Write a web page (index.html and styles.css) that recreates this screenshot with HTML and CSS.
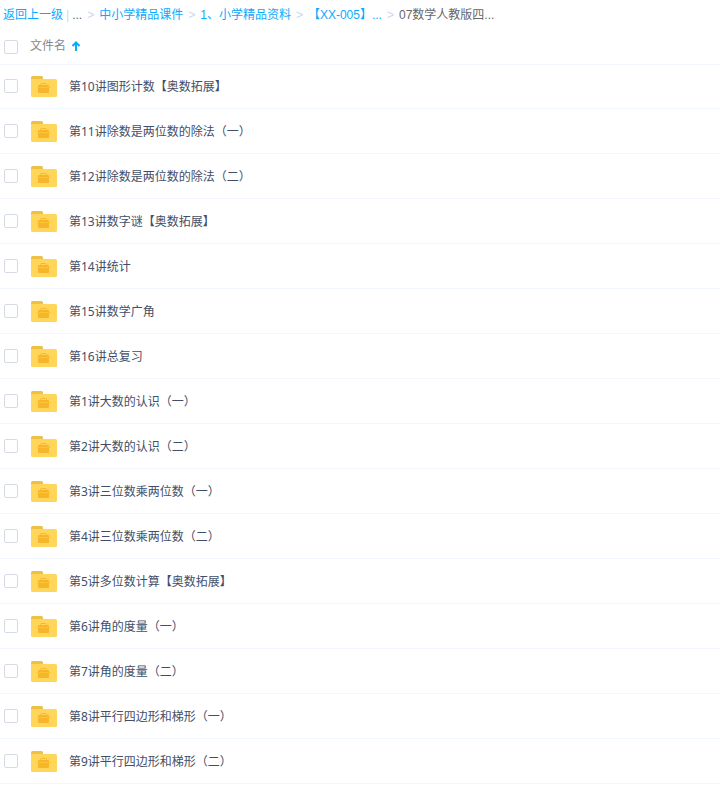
FILE: index.html
```
<!DOCTYPE html>
<html lang="zh-CN">
<head>
<meta charset="utf-8">
<title>07数学人教版四年级</title>
<link rel="stylesheet" href="styles.css">
</head>
<body>
<svg class="sprite" aria-hidden="true">
  <symbol id="folder" viewBox="0 0 26 21">
    <path fill="#eec047" d="M0 6V1.5Q0 0 1.5 0H10.500Q12 0 12 1.500V6Z"/>
    <path fill="#ffd55a" d="M0 3H24.500Q26 3 26 4.500V19.500Q26 21 24.500 21H1.500Q0 21 0 19.500Z"/>
    <path fill="none" stroke="#f7b731" d="M9.500 9V8.500Q9.500 7.500 10.500 7.500H14.500Q15.500 7.500 15.500 8.500V9"/>
    <path fill="#f7b52c" d="M8 9H17Q18 9 18 10V11H7V10Q7 9 8 9ZM7 12H18V16Q18 17 17 17H8Q7 17 7 16Z"/>
    <path fill="#fdc62f" d="M6 11H20V12H6Z"/>
  </symbol>
</svg>
<nav class="crumbs" aria-label="路径">
  <span class="back"><a href="#">返回上一级</a><span class="bar">|</span><span>...</span></span>
  <span class="sep">&gt;</span><a href="#">中小学精品课件</a>
  <span class="sep">&gt;</span><a href="#">1、小学精品资料</a>
  <span class="sep">&gt;</span><a href="#">【XX-005】...</a>
  <span class="sep">&gt;</span><span>07数学人教版四...</span>
</nav>
<table class="files">
  <thead>
    <tr>
      <th class="pick"><input type="checkbox" aria-label="全选"></th>
      <th class="title" colspan="2"><button class="sort" type="button">文件名<svg width="8" height="10" viewBox="0 0 8 10" aria-hidden="true"><path d="M4 10V2M0.500 5L4 1.500L7.500 5" fill="none" stroke="#09aaff" stroke-width="2"/></svg></button></th>
    </tr>
  </thead>
  <tbody>
    <tr><td class="pick"><input type="checkbox" id="f1"></td><td class="icon"><svg class="folder"><use href="#folder"/></svg></td><td><label for="f1">第10讲图形计数【奥数拓展】</label></td></tr>
    <tr><td class="pick"><input type="checkbox" id="f2"></td><td class="icon"><svg class="folder"><use href="#folder"/></svg></td><td><label for="f2">第11讲除数是两位数的除法（一）</label></td></tr>
    <tr><td class="pick"><input type="checkbox" id="f3"></td><td class="icon"><svg class="folder"><use href="#folder"/></svg></td><td><label for="f3">第12讲除数是两位数的除法（二）</label></td></tr>
    <tr><td class="pick"><input type="checkbox" id="f4"></td><td class="icon"><svg class="folder"><use href="#folder"/></svg></td><td><label for="f4">第13讲数字谜【奥数拓展】</label></td></tr>
    <tr><td class="pick"><input type="checkbox" id="f5"></td><td class="icon"><svg class="folder"><use href="#folder"/></svg></td><td><label for="f5">第14讲统计</label></td></tr>
    <tr><td class="pick"><input type="checkbox" id="f6"></td><td class="icon"><svg class="folder"><use href="#folder"/></svg></td><td><label for="f6">第15讲数学广角</label></td></tr>
    <tr><td class="pick"><input type="checkbox" id="f7"></td><td class="icon"><svg class="folder"><use href="#folder"/></svg></td><td><label for="f7">第16讲总复习</label></td></tr>
    <tr><td class="pick"><input type="checkbox" id="f8"></td><td class="icon"><svg class="folder"><use href="#folder"/></svg></td><td><label for="f8">第1讲大数的认识（一）</label></td></tr>
    <tr><td class="pick"><input type="checkbox" id="f9"></td><td class="icon"><svg class="folder"><use href="#folder"/></svg></td><td><label for="f9">第2讲大数的认识（二）</label></td></tr>
    <tr><td class="pick"><input type="checkbox" id="f10"></td><td class="icon"><svg class="folder"><use href="#folder"/></svg></td><td><label for="f10">第3讲三位数乘两位数（一）</label></td></tr>
    <tr><td class="pick"><input type="checkbox" id="f11"></td><td class="icon"><svg class="folder"><use href="#folder"/></svg></td><td><label for="f11">第4讲三位数乘两位数（二）</label></td></tr>
    <tr><td class="pick"><input type="checkbox" id="f12"></td><td class="icon"><svg class="folder"><use href="#folder"/></svg></td><td><label for="f12">第5讲多位数计算【奥数拓展】</label></td></tr>
    <tr><td class="pick"><input type="checkbox" id="f13"></td><td class="icon"><svg class="folder"><use href="#folder"/></svg></td><td><label for="f13">第6讲角的度量（一）</label></td></tr>
    <tr><td class="pick"><input type="checkbox" id="f14"></td><td class="icon"><svg class="folder"><use href="#folder"/></svg></td><td><label for="f14">第7讲角的度量（二）</label></td></tr>
    <tr><td class="pick"><input type="checkbox" id="f15"></td><td class="icon"><svg class="folder"><use href="#folder"/></svg></td><td><label for="f15">第8讲平行四边形和梯形（一）</label></td></tr>
    <tr><td class="pick"><input type="checkbox" id="f16"></td><td class="icon"><svg class="folder"><use href="#folder"/></svg></td><td><label for="f16">第9讲平行四边形和梯形（二）</label></td></tr>
  </tbody>
</table>
</body>
</html>
```
FILE: styles.css
```
* {
  box-sizing: border-box;
}

body {
  margin: 0;
  background: #fff;
  color: #424e67;
  font: 12px/18px "Noto Sans", "Noto Sans CJK SC", sans-serif;
}

.sprite {
  display: none;
}

.crumbs {
  display: flex;
  align-items: center;
  gap: 5px;
  height: 30px;
  padding-left: 3px;
  color: #666;
  font-family: "Liberation Sans", "Noto Sans CJK SC", sans-serif;
  white-space: nowrap;
}

.crumbs a {
  color: #09aaff;
  text-decoration: none;
}

.back {
  display: flex;
  gap: 3px;
}

.bar {
  color: #b8e3f5;
}

.sep {
  color: #c4d8f4;
}

.files {
  width: 100%;
  border-collapse: separate;
  border-spacing: 0;
}

th,
td {
  padding: 0;
  font-weight: normal;
  text-align: left;
  vertical-align: middle;
}

th {
  height: 34px;
  box-shadow: 0 1px 0 #f2f6fd;
}

td {
  height: 45px;
  border-bottom: 1px solid #f2f6fd;
}

.pick {
  width: 30px;
  padding-left: 4px;
}

.icon {
  width: 39px;
  padding-left: 1px;
}

.folder {
  display: block;
  width: 26px;
  height: 21px;
}

input {
  display: block;
  appearance: none;
  width: 14px;
  height: 14px;
  margin: 0;
  border: 1px solid #d5dae4;
  border-radius: 2px;
  background: #fff;
}

input:checked {
  border-color: #09aaff;
  background: #09aaff;
}

label {
  display: block;
  padding-top: 2px;
}

.sort {
  display: flex;
  align-items: center;
  gap: 6px;
  padding: 0 0 2px;
  border: 0;
  background: none;
  color: #888;
  font: inherit;
}
```
